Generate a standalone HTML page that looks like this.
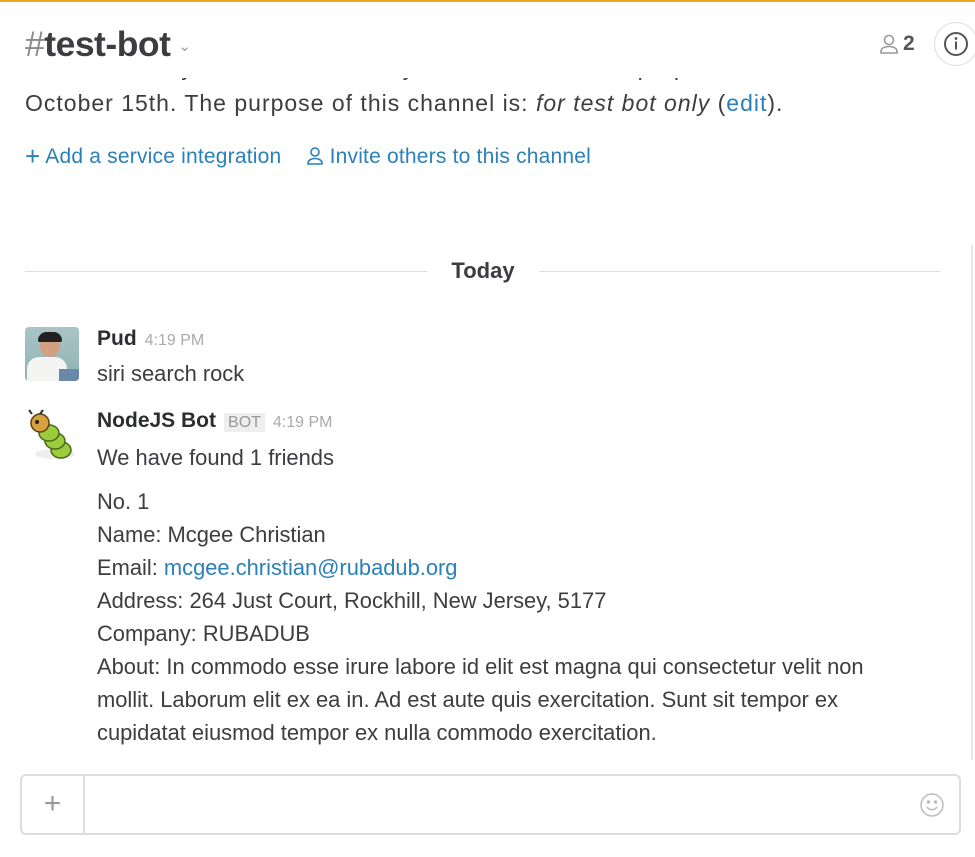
<!DOCTYPE html>
<html><head><meta charset="utf-8">
<style>
*{margin:0;padding:0;box-sizing:border-box}
body{width:975px;height:857px;background:#fff;font-family:"Liberation Sans",sans-serif;color:#3d3c40;position:relative;overflow:hidden}
.topline{position:absolute;left:0;top:0;width:975px;height:2px;background:#e8a723}
.clip{position:absolute;left:25px;top:54px;font-size:23px;color:#3d3c40;white-space:nowrap;letter-spacing:1px}
.header{position:absolute;left:0;top:2px;width:975px;height:76px;background:#fff}
.title{position:absolute;left:25px;top:22px;font-size:35.5px;font-weight:bold;color:#3d3c40;letter-spacing:-0.5px}
.title .h{color:#8a8a8a;font-weight:normal}
.title .car{font-size:15px;color:#999;font-weight:normal;margin-left:8px;vertical-align:5px}
.members{position:absolute;left:878px;top:30px;font-size:21px;font-weight:bold;color:#555;display:flex;align-items:center;gap:3px}
.info{position:absolute;left:934px;top:20px;width:44px;height:44px;border-radius:50%;border:1px solid #ddd;background:#fff}
.p1{position:absolute;left:25px;top:90px;font-size:23px;white-space:nowrap;letter-spacing:1.0px}
a{color:#2a80b9;text-decoration:none}
.links{position:absolute;left:25px;top:141px;font-size:21px;color:#2a80b9;white-space:nowrap;letter-spacing:0.2px}
.day{position:absolute;left:25px;top:271px;width:915px;height:1px;background:#ddd}
.daylbl{position:absolute;left:427px;top:258px;width:112px;text-align:center;background:#fff;font-size:22px;font-weight:bold;color:#3d3c40}
.av{position:absolute;left:25px;width:54px;height:54px;border-radius:4px}
.name{position:absolute;left:97px;font-size:21px;font-weight:bold;color:#2c2d30;white-space:nowrap}
.time{font-size:16px;color:#aaa;font-weight:normal;margin-left:8px}
.bot{font-size:16px;color:#999;background:#eee;font-weight:normal;padding:1px 4px;margin-left:8px}
.txt{position:absolute;left:97px;font-size:21.9px;line-height:33px;white-space:nowrap;color:#3d3c40}
.scroll{position:absolute;left:971px;top:245px;width:2px;height:515px;background:#e5e5e5}
.input{position:absolute;left:20px;top:774px;width:941px;height:61px;border:2px solid #ddd;border-radius:6px}
.plus{position:absolute;left:0;top:0;width:63px;height:57px;border-right:2px solid #ddd;font-size:30px;color:#999;text-align:center;line-height:56px}
</style></head><body>
<div class="topline"></div>
<div class="clip">was created by Pud Y. on Saturday, October 15th. The purpose</div>
<div class="header">
 <div class="title"><span class="h">#</span>test-bot<span class="car">⌄</span></div>
 <div class="members"><svg width="22" height="22" viewBox="0 0 22 22" fill="none" stroke="#999" stroke-width="1.6"><circle cx="11" cy="7" r="4.5"/><path d="M3 20v-1.5c0-3 3-5 8-5s8 2 8 5V20z"/></svg>2</div>
 <div class="info"><svg width="44" height="44" viewBox="0 0 44 44" style="position:absolute;left:-1px;top:-1px"><circle cx="22" cy="22" r="11" fill="none" stroke="#555" stroke-width="2"/><circle cx="22" cy="16.5" r="1.4" fill="#555"/><rect x="21" y="19.5" width="2" height="8" fill="#555"/></svg></div>
</div>
<div class="p1">October 15th. The purpose of this channel is: <i>for test bot only</i> (<a>edit</a>).</div>
<div class="links"><span style="font-size:26px;vertical-align:-2px">+</span> Add a service integration &nbsp;&nbsp;&nbsp;<svg width="18" height="19" viewBox="0 0 18 19" fill="none" stroke="#2a80b9" stroke-width="1.6" style="vertical-align:-2px"><circle cx="9" cy="6" r="4"/><path d="M2 18v-1c0-2.5 3-4.5 7-4.5s7 2 7 4.5v1z"/></svg> Invite others to this channel</div>
<div class="day"></div>
<div class="daylbl">Today</div>
<div class="av" style="top:327px;overflow:hidden;background:linear-gradient(#a9c4c7,#8fb3b4)">
 <div style="position:absolute;left:15px;top:8px;width:20px;height:22px;border-radius:50%;background:#d0a080"></div>
 <div style="position:absolute;left:13px;top:5px;width:24px;height:10px;border-radius:10px 10px 2px 2px;background:#222"></div>
 <div style="position:absolute;left:2px;top:30px;width:40px;height:30px;border-radius:12px 12px 0 0;background:#f4f4f2"></div>
 <div style="position:absolute;left:34px;top:42px;width:22px;height:14px;background:#6a88a8"></div>
</div>
<div class="name" style="top:327px">Pud<span class="time">4:19 PM</span></div>
<div class="txt" style="top:357px">siri search rock</div>
<div class="av" style="top:408px"><svg width="54" height="54" viewBox="0 0 54 54"><ellipse cx="30" cy="46" rx="20" ry="5" fill="#eee"/><g fill="#9ccc3c" stroke="#4a6a1a" stroke-width="1.5"><ellipse cx="36" cy="42" rx="10" ry="8"/><ellipse cx="30" cy="33" rx="10" ry="8"/><ellipse cx="24" cy="25" rx="10" ry="8"/></g><circle cx="15" cy="15" r="9" fill="#d9a040" stroke="#5a4010" stroke-width="1.5"/><path d="M7 6 L4 2 M15 6 L18 2" stroke="#333" stroke-width="2"/><circle cx="12" cy="14" r="2" fill="#222"/></svg></div>
<div class="name" style="top:409px">NodeJS Bot<span class="bot">BOT</span><span class="time">4:19 PM</span></div>
<div class="txt" style="top:441px">We have found 1 friends</div>
<div class="txt" style="top:485px">No. 1<br>Name: Mcgee Christian<br>Email: <a>mcgee.christian@rubadub.org</a><br>Address: 264 Just Court, Rockhill, New Jersey, 5177<br>Company: RUBADUB<br>About: In commodo esse irure labore id elit est magna qui consectetur velit non<br>mollit. Laborum elit ex ea in. Ad est aute quis exercitation. Sunt sit tempor ex<br>cupidatat eiusmod tempor ex nulla commodo exercitation.</div>
<div class="scroll"></div>
<div class="input"><div class="plus">+</div>
 <svg width="26" height="26" viewBox="0 0 26 26" style="position:absolute;left:897px;top:16px" fill="none" stroke="#bbb" stroke-width="1.5"><circle cx="13" cy="13" r="11"/><circle cx="9.5" cy="10" r="1" fill="#bbb"/><circle cx="16.5" cy="10" r="1" fill="#bbb"/><path d="M8 15c2 3.5 8 3.5 10 0"/></svg>
</div>
</body></html>
